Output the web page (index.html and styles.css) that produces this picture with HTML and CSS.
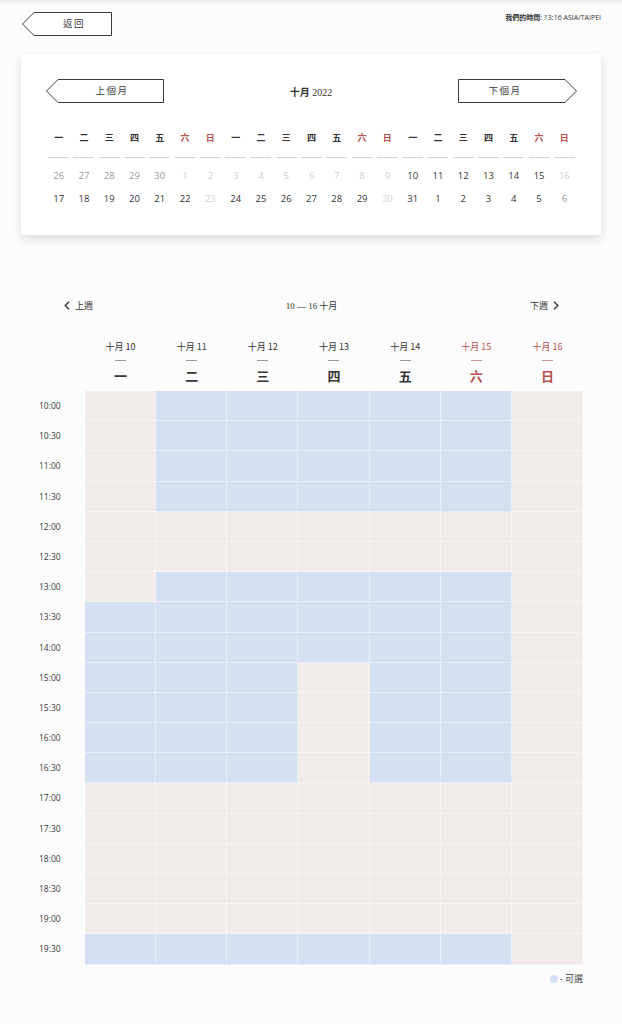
FILE: index.html
```html
<!DOCTYPE html>
<html lang="zh-Hant">
<head>
<meta charset="utf-8">
<title>預約時間</title>
<link rel="stylesheet" href="styles.css">
</head>
<body>
<div class="topbar">
  <button class="arrow-btn back">
    <svg class="shape" width="90" height="24" viewBox="0 0 90 24"><polygon points="12,0.5 89.5,0.5 89.5,23.5 12,23.5 0.5,12"/></svg>
    <span class="label">返回</span>
  </button>
  <div class="ourtime"><b>我們的時間</b>: 13:16 ASIA/TAIPEI</div>
</div>

<div class="card">
  <div class="month-nav">
    <button class="arrow-btn prev">
      <svg class="shape" width="118" height="24" viewBox="0 0 118 24"><polygon points="12,0.5 117.5,0.5 117.5,23.5 12,23.5 0.5,12"/></svg>
      <span class="label">上個月</span>
    </button>
    <div class="month-title">十月 <span class="serif">2022</span></div>
    <button class="arrow-btn next">
      <svg class="shape" width="119" height="24" viewBox="0 0 119 24"><polygon points="0.5,0.5 107,0.5 118.5,12 107,23.5 0.5,23.5"/></svg>
      <span class="label">下個月</span>
    </button>
  </div>
  <div class="mini">
    <div class="wd"><span>一</span></div><div class="wd"><span>二</span></div><div class="wd"><span>三</span></div><div class="wd"><span>四</span></div><div class="wd"><span>五</span></div><div class="wd red"><span>六</span></div><div class="wd red"><span>日</span></div>
    <div class="wd"><span>一</span></div><div class="wd"><span>二</span></div><div class="wd"><span>三</span></div><div class="wd"><span>四</span></div><div class="wd"><span>五</span></div><div class="wd red"><span>六</span></div><div class="wd red"><span>日</span></div>
    <div class="wd"><span>一</span></div><div class="wd"><span>二</span></div><div class="wd"><span>三</span></div><div class="wd"><span>四</span></div><div class="wd"><span>五</span></div><div class="wd red"><span>六</span></div><div class="wd red"><span>日</span></div>

    <div class="d other">26</div><div class="d other">27</div><div class="d other">28</div><div class="d other">29</div><div class="d other">30</div><div class="d off">1</div><div class="d off">2</div>
    <div class="d off">3</div><div class="d off">4</div><div class="d off">5</div><div class="d off">6</div><div class="d off">7</div><div class="d off">8</div><div class="d off">9</div>
    <div class="d">10</div><div class="d">11</div><div class="d">12</div><div class="d">13</div><div class="d">14</div><div class="d">15</div><div class="d off">16</div>

    <div class="d">17</div><div class="d">18</div><div class="d">19</div><div class="d">20</div><div class="d">21</div><div class="d">22</div><div class="d off">23</div>
    <div class="d">24</div><div class="d">25</div><div class="d">26</div><div class="d">27</div><div class="d">28</div><div class="d">29</div><div class="d off">30</div>
    <div class="d">31</div><div class="d">1</div><div class="d">2</div><div class="d">3</div><div class="d">4</div><div class="d">5</div><div class="d other">6</div>
  </div>
</div>

<div class="week">
  <div class="week-nav">
    <a class="wlink"><svg width="6" height="9" viewBox="0 0 6 9"><polyline points="5,0.8 1.2,4.5 5,8.2"/></svg><span>上週</span></a>
    <div class="week-title"><span class="serif">10 — 16</span> 十月</div>
    <a class="wlink"><span>下週</span><svg width="6" height="9" viewBox="0 0 6 9"><polyline points="1,0.8 4.8,4.5 1,8.2"/></svg></a>
  </div>

  <div class="sched">
    <div class="corner"></div>
    <div class="dh"><div class="dt">十月 10</div><div class="dash"></div><div class="dw">一</div></div>
    <div class="dh"><div class="dt">十月 11</div><div class="dash"></div><div class="dw">二</div></div>
    <div class="dh"><div class="dt">十月 12</div><div class="dash"></div><div class="dw">三</div></div>
    <div class="dh"><div class="dt">十月 13</div><div class="dash"></div><div class="dw">四</div></div>
    <div class="dh"><div class="dt">十月 14</div><div class="dash"></div><div class="dw">五</div></div>
    <div class="dh red"><div class="dt">十月 15</div><div class="dash"></div><div class="dw">六</div></div>
    <div class="dh red"><div class="dt">十月 16</div><div class="dash"></div><div class="dw">日</div></div>

    <div class="t">10:00</div><div class="c"></div><div class="c a"></div><div class="c a"></div><div class="c a"></div><div class="c a"></div><div class="c a"></div><div class="c"></div>
    <div class="t">10:30</div><div class="c"></div><div class="c a"></div><div class="c a"></div><div class="c a"></div><div class="c a"></div><div class="c a"></div><div class="c"></div>
    <div class="t">11:00</div><div class="c"></div><div class="c a"></div><div class="c a"></div><div class="c a"></div><div class="c a"></div><div class="c a"></div><div class="c"></div>
    <div class="t">11:30</div><div class="c"></div><div class="c a"></div><div class="c a"></div><div class="c a"></div><div class="c a"></div><div class="c a"></div><div class="c"></div>
    <div class="t">12:00</div><div class="c"></div><div class="c"></div><div class="c"></div><div class="c"></div><div class="c"></div><div class="c"></div><div class="c"></div>
    <div class="t">12:30</div><div class="c"></div><div class="c"></div><div class="c"></div><div class="c"></div><div class="c"></div><div class="c"></div><div class="c"></div>
    <div class="t">13:00</div><div class="c"></div><div class="c a"></div><div class="c a"></div><div class="c a"></div><div class="c a"></div><div class="c a"></div><div class="c"></div>
    <div class="t">13:30</div><div class="c a"></div><div class="c a"></div><div class="c a"></div><div class="c a"></div><div class="c a"></div><div class="c a"></div><div class="c"></div>
    <div class="t">14:00</div><div class="c a"></div><div class="c a"></div><div class="c a"></div><div class="c a"></div><div class="c a"></div><div class="c a"></div><div class="c"></div>
    <div class="t">15:00</div><div class="c a"></div><div class="c a"></div><div class="c a"></div><div class="c"></div><div class="c a"></div><div class="c a"></div><div class="c"></div>
    <div class="t">15:30</div><div class="c a"></div><div class="c a"></div><div class="c a"></div><div class="c"></div><div class="c a"></div><div class="c a"></div><div class="c"></div>
    <div class="t">16:00</div><div class="c a"></div><div class="c a"></div><div class="c a"></div><div class="c"></div><div class="c a"></div><div class="c a"></div><div class="c"></div>
    <div class="t">16:30</div><div class="c a"></div><div class="c a"></div><div class="c a"></div><div class="c"></div><div class="c a"></div><div class="c a"></div><div class="c"></div>
    <div class="t">17:00</div><div class="c"></div><div class="c"></div><div class="c"></div><div class="c"></div><div class="c"></div><div class="c"></div><div class="c"></div>
    <div class="t">17:30</div><div class="c"></div><div class="c"></div><div class="c"></div><div class="c"></div><div class="c"></div><div class="c"></div><div class="c"></div>
    <div class="t">18:00</div><div class="c"></div><div class="c"></div><div class="c"></div><div class="c"></div><div class="c"></div><div class="c"></div><div class="c"></div>
    <div class="t">18:30</div><div class="c"></div><div class="c"></div><div class="c"></div><div class="c"></div><div class="c"></div><div class="c"></div><div class="c"></div>
    <div class="t">19:00</div><div class="c"></div><div class="c"></div><div class="c"></div><div class="c"></div><div class="c"></div><div class="c"></div><div class="c"></div>
    <div class="t">19:30</div><div class="c a"></div><div class="c a"></div><div class="c a"></div><div class="c a"></div><div class="c a"></div><div class="c a"></div><div class="c"></div>
  </div>

  <div class="legend"><span class="dot"></span><span>- 可選</span></div>
</div>
</body>
</html>
```

FILE: styles.css
```css
* { box-sizing: border-box; }

html {
  background: #fcfcfc linear-gradient(#ececec, #fcfcfc 5px) no-repeat;
}

body {
  margin: 0;
  font-family: "Open Sans", "Noto Sans CJK TC", sans-serif;
  color: #333;
}

.serif {
  font-family: "Liberation Serif", "DejaVu Serif", serif;
}

/* arrow buttons */
.arrow-btn {
  position: relative;
  display: flex;
  align-items: center;
  justify-content: center;
  height: 24px;
  padding: 0;
  border: 0;
  background: transparent;
  font-family: "Noto Sans CJK TC", sans-serif;
  color: #333;
  cursor: pointer;
}
.arrow-btn .shape {
  position: absolute;
  left: 0;
  top: 0;
}
.arrow-btn .shape polygon {
  fill: #fff;
  stroke: #3a3a3a;
  stroke-width: 1;
}
.arrow-btn .label {
  position: relative;
  font-size: 9.5px;
  letter-spacing: 1.5px;
  line-height: 1;
  color: #3a3a3a;
}

.back { width: 90px; padding-left: 14px; }
.prev { width: 118px; padding-left: 14px; }
.next { width: 119px; padding-right: 25px; }

/* top bar */
.topbar {
  display: flex;
  justify-content: space-between;
  align-items: flex-start;
  padding: 12px 21px 0 22px;
}
.ourtime {
  font-family: "Open Sans", "Noto Sans CJK TC", sans-serif;
  font-size: 7px;
  line-height: 10px;
  margin-top: 1px;
  color: #333;
}
.ourtime b { font-weight: 700; }

/* month card */
.card {
  margin: 18px 21px 0 21px;
  background: #fff;
  padding: 25px 24px 25px 25px;
  box-shadow: 0 4px 9px rgba(0, 0, 0, 0.13);
}
.month-nav {
  display: flex;
  justify-content: space-between;
  align-items: center;
  height: 24px;
}
.month-title {
  font-family: "Noto Sans CJK TC", sans-serif;
  font-size: 10px;
  font-weight: 700;
  color: #333;
}
.month-title .serif { font-weight: 400; font-size: 10px; }

.mini {
  display: grid;
  grid-template-columns: repeat(21, 1fr);
  margin-top: 28px;
}
.wd {
  display: flex;
  flex-direction: column;
  align-items: center;
  font-family: "Noto Sans CJK TC", sans-serif;
  font-size: 9px;
  font-weight: 700;
  line-height: 14px;
  color: #333;
  margin-bottom: 6px;
}
.wd span {
  display: block;
  width: 21px;
  text-align: center;
  padding-bottom: 12px;
  border-bottom: 1px solid #d4d4d4;
}
.wd.red { color: #b5504d; }

.d {
  text-align: center;
  font-size: 9.5px;
  line-height: 23px;
  height: 23px;
  color: #333;
}
.d.other { color: #9a9a9a; }
.d.off { color: #cfcfcf; }

/* week */
.week {
  padding: 0 39px;
  margin-top: 63px;
}
.week-nav {
  display: flex;
  justify-content: space-between;
  align-items: center;
  margin: 0 24px 0 25px;
  height: 14px;
}
.wlink {
  display: flex;
  align-items: center;
  gap: 5px;
  font-family: "Noto Sans CJK TC", sans-serif;
  font-size: 9px;
  color: #333;
}
.wlink svg polyline {
  fill: none;
  stroke: #333;
  stroke-width: 1.3;
}
.week-title {
  font-family: "Noto Sans CJK TC", sans-serif;
  font-size: 9px;
  color: #333;
}
.week-title .serif { font-size: 9px; }

.sched {
  display: grid;
  grid-template-columns: 46px repeat(7, 1fr);
  grid-template-rows: 51px;
  grid-auto-rows: 30.2px;
  margin-top: 28px;
}
.dh {
  display: flex;
  flex-direction: column;
  align-items: center;
  color: #333;
}
.dt {
  font-family: "Noto Sans CJK TC", sans-serif;
  font-size: 9px;
  line-height: 12px;
  margin-top: 1px;
}
.dash {
  width: 11px;
  height: 1px;
  background: #999;
  margin-top: 7px;
}
.dw {
  font-family: "Noto Sans CJK TC", sans-serif;
  font-size: 13px;
  font-weight: 700;
  line-height: 16px;
  margin-top: 7px;
}
.dh.red { color: #b5504d; }
.dh.red .dash { background: #c99; }

.t {
  font-size: 8.5px;
  line-height: 30.2px;
  color: #3a3a3a;
}
.c {
  background: #f1ece9;
  border-right: 1px solid rgba(255, 255, 255, 0.45);
  border-bottom: 1px solid rgba(255, 255, 255, 0.45);
}
.c.a { background: #d4e0f1; }

.legend {
  display: flex;
  justify-content: flex-end;
  align-items: center;
  gap: 2px;
  margin-top: 8px;
  font-family: "Noto Sans CJK TC", sans-serif;
  font-size: 9px;
  line-height: 12px;
  color: #444;
}
.dot {
  width: 8px;
  height: 8px;
  border-radius: 50%;
  background: #d4e0f1;
}
```
